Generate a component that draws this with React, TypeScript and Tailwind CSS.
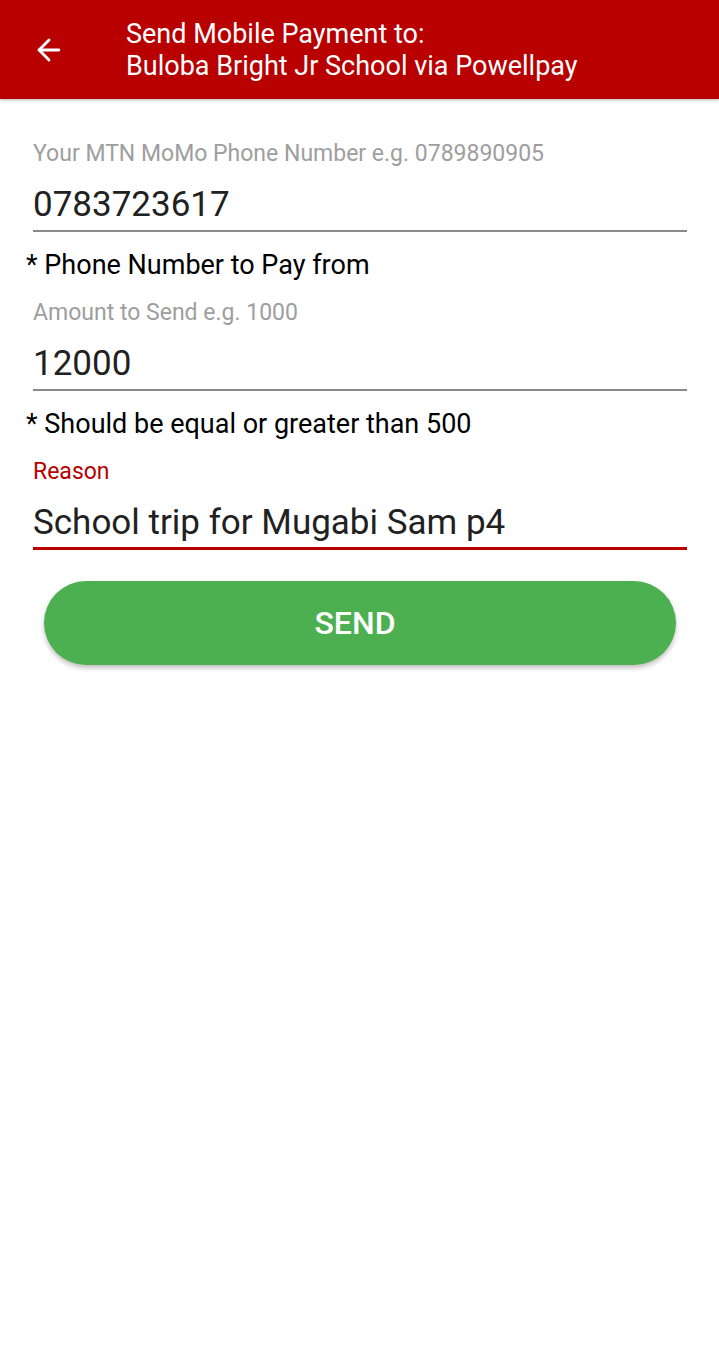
import React from 'react';
import { ArrowLeft } from 'lucide-react';

const Field: React.FC<{ label: string; value: string; active?: boolean }> = ({ label, value, active }) => (
  <div className="pl-[33px] pr-[32px]">
    <div className={`text-[23px] leading-[28px] ${active ? 'text-[#b80000]' : 'text-[#9e9e9e]'}`}>{label}</div>
    <div className="mt-[17px] text-[35px] leading-[40px] text-[#212121]">{value}</div>
    <div className={active ? 'mt-[4px] h-[3px] bg-[#b80000]' : 'mt-[5px] h-[2px] bg-[#8a8a8a]'} />
  </div>
);

const Helper: React.FC<{ children: React.ReactNode }> = ({ children }) => (
  <div className="mt-[17px] pl-[26px] text-[27px] leading-[32px] text-black">{children}</div>
);

export default function App() {
  return (
    <div className="min-h-[1364px] w-[719px] bg-white" style={{ fontFamily: 'Roboto, sans-serif' }}>
      <div className="flex h-[99px] items-center bg-[#b80000] shadow-[0_1px_3px_rgba(0,0,0,0.3)]">
        <div className="flex w-[126px] items-center pl-[32px]">
          <ArrowLeft className="h-[34px] w-[34px] text-white" strokeWidth={2} />
        </div>
        <div className="text-[27px] leading-[32px] text-white">
          <div>Send Mobile Payment to:</div>
          <div>Buloba Bright Jr School via Powellpay</div>
        </div>
      </div>

      <div className="pt-[41px]">
        <Field label="Your MTN MoMo Phone Number e.g. 0789890905" value="0783723617" />
        <Helper>* Phone Number to Pay from</Helper>
        <div className="mt-[18px]">
          <Field label="Amount to Send e.g. 1000" value="12000" />
        </div>
        <Helper>* Should be equal or greater than 500</Helper>
        <div className="mt-[18px]">
          <Field label="Reason" value="School trip for Mugabi Sam p4" active />
        </div>
        <div className="mt-[31px] px-[44px]">
          <button className="flex h-[84px] w-[632px] items-center justify-center rounded-full bg-[#4caf50] pr-[10px] text-[32px] font-medium text-white shadow-[0_3px_5px_rgba(0,0,0,0.25)]">
            SEND
          </button>
        </div>
      </div>
    </div>
  );
}
